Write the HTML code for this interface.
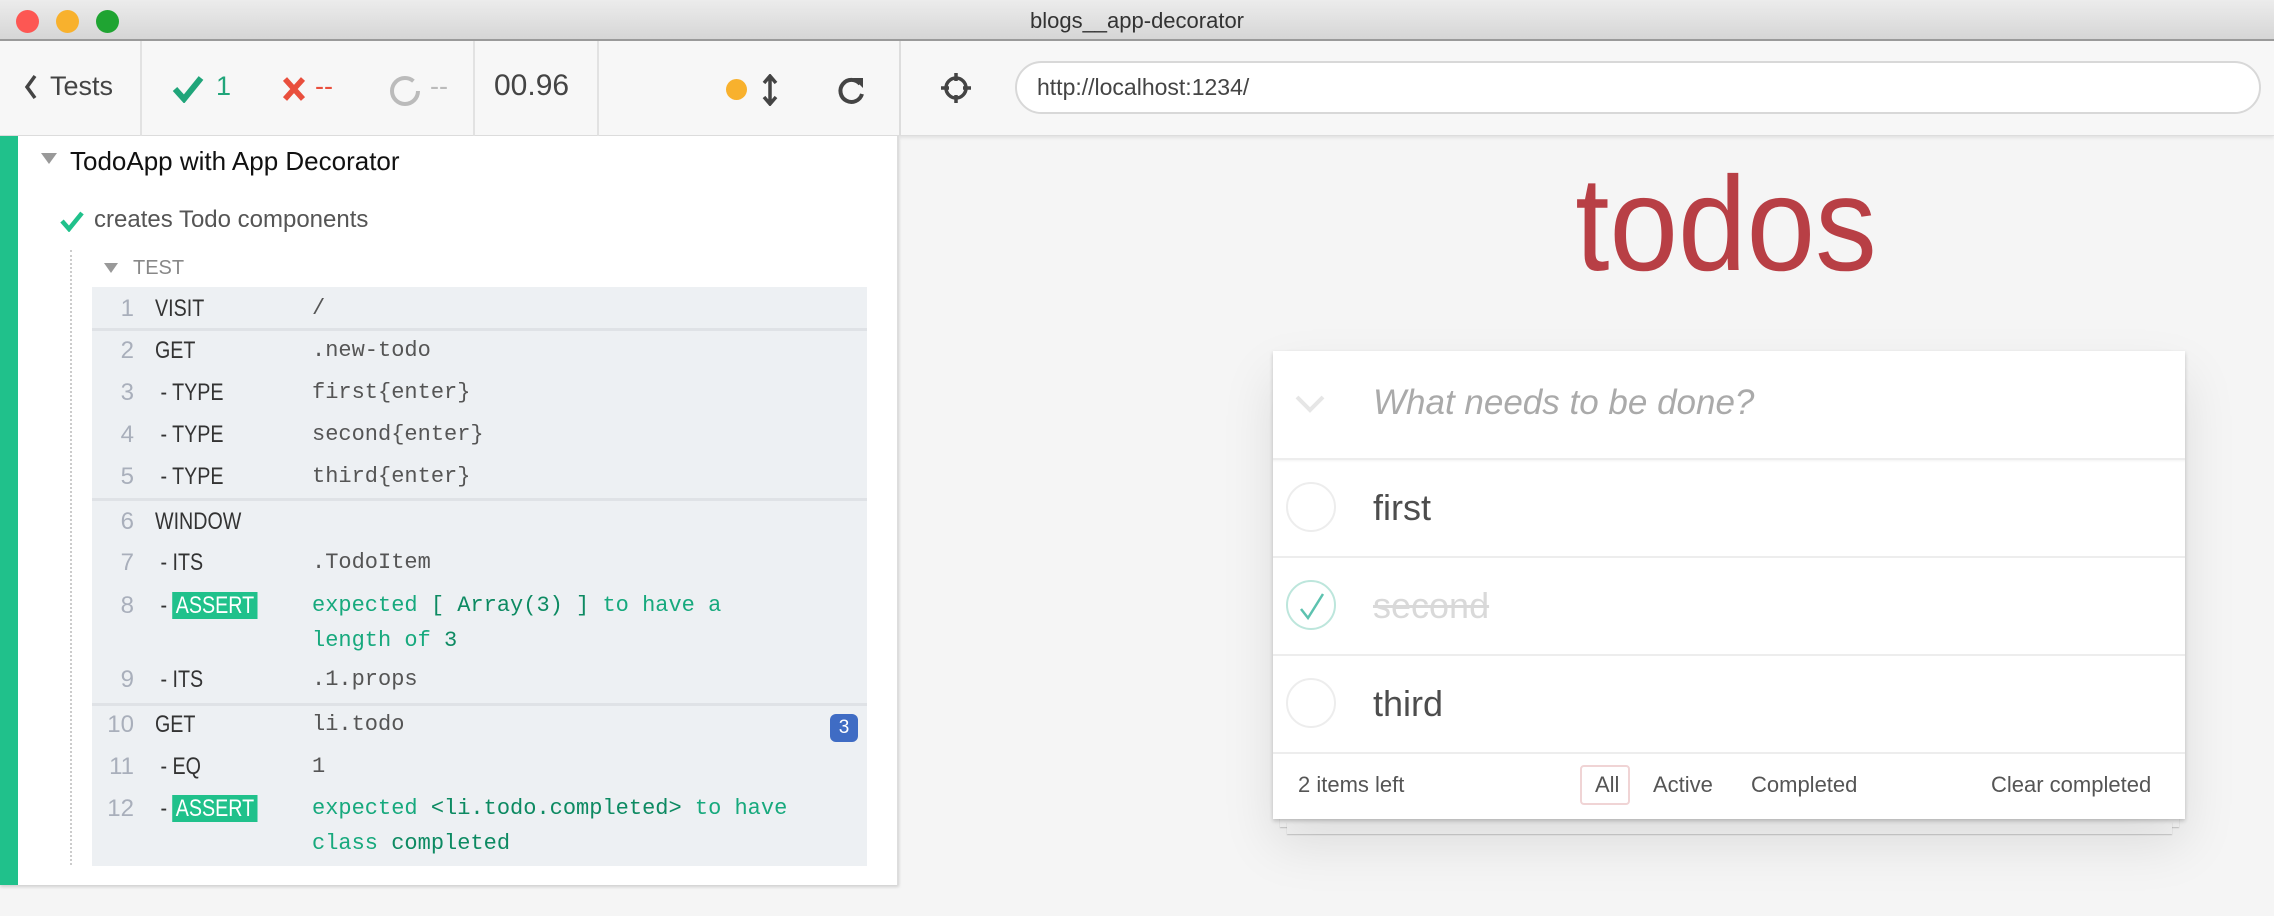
<!DOCTYPE html>
<html><head><meta charset="utf-8"><style>
*{box-sizing:border-box;margin:0;padding:0}
body{width:2274px;height:916px;overflow:hidden;background:#f5f5f5;font-family:"Liberation Sans",sans-serif;position:relative}
.abs{position:absolute}
#title{left:0;top:0;width:2274px;height:41px;background:linear-gradient(#ececec,#d6d6d6);border-bottom:2px solid #9a9a9a;text-align:center;font-size:22px;line-height:41px;color:#333}
.dot{top:10px;width:23px;height:23px;border-radius:50%}
#tb{left:0;top:41px;width:2274px;height:95px;background:#f7f7f7;border-bottom:1px solid #ddd;box-shadow:0 2px 3px rgba(0,0,0,.08)}
.vd{top:41px;height:95px;width:2px;background:#e2e2e2}
.tt{font-size:27px;color:#444;top:71px}
#left{left:0;top:136px;width:899px;height:749px;background:#fff;border-right:2px solid #ddd;box-shadow:0 2px 3px rgba(0,0,0,.15)}
#green{left:0;top:136px;width:18px;height:749px;background:#20c18b}
#cmd{left:92px;top:287px;width:775px;height:579px;background:#edf0f3}
.r{position:absolute;left:0;width:775px;font-size:22px;height:40px;line-height:40px}
.n{position:absolute;width:42px;text-align:right;color:#a9afbb;font-family:"Liberation Sans",sans-serif;font-size:24px}
.c{position:absolute;left:63px;color:#333;font-family:"Liberation Sans",sans-serif;font-size:24px;transform:scaleX(.82);transform-origin:left}
.v{position:absolute;left:220px;color:#555;font-family:"Liberation Mono",monospace;font-size:22px}
.g{color:#17a97d}.gb{color:#0d8a62}
.as{background:#20c18b;color:#fff;padding:0 4px}
.sep{position:absolute;left:0;width:775px;height:3px;background:#dfe2e6}
#card{left:1273px;top:351px;width:912px;height:468px;background:#fff;box-shadow:0 2px 4px rgba(0,0,0,.2),0 25px 50px rgba(0,0,0,.1)}
.it{position:absolute;left:0;width:912px;border-top:2px solid #ededed}
.ci{position:absolute;left:13px;width:50px;height:50px;border-radius:50%;border:2px solid #ededed}
.itx{position:absolute;left:100px;font-size:36px;color:#4d4d4d}
.ft{position:absolute;font-size:22px;color:#555;top:421px}
</style></head><body>
<div id="title" class="abs">blogs__app-decorator</div>
<div class="abs dot" style="left:16px;background:#fd5753"></div>
<div class="abs dot" style="left:56px;background:#f8b12d"></div>
<div class="abs dot" style="left:96px;background:#1fa432"></div>
<div id="tb" class="abs"></div>
<div class="abs vd" style="left:140px"></div>
<div class="abs vd" style="left:473px"></div>
<div class="abs vd" style="left:597px"></div>
<div class="abs vd" style="left:899px;background:#ddd"></div>
<svg class="abs" style="left:24px;top:74px" width="14" height="26"><path d="M11 2 3 13l8 11" stroke="#444" stroke-width="3.5" fill="none"/></svg>
<div class="abs tt" style="left:50px">Tests</div>
<svg class="abs" style="left:172px;top:75px" width="32" height="28"><path d="M3 14l9 10L29 3" stroke="#20a57a" stroke-width="6" fill="none"/></svg>
<div class="abs tt" style="left:216px;color:#20a57a">1</div>
<svg class="abs" style="left:282px;top:76px" width="24" height="26"><path d="M3 3l18 20M21 3 3 23" stroke="#e94f3d" stroke-width="5.5"/></svg>
<div class="abs tt" style="left:315px;color:#e94f3d">--</div>
<svg class="abs" style="left:388px;top:74px" width="34" height="34"><circle cx="17" cy="17" r="13" stroke="#bbb" stroke-width="4" fill="none" stroke-dasharray="70 12"/></svg>
<div class="abs tt" style="left:430px;color:#bbb">--</div>
<div class="abs" style="left:494px;top:69px;font-size:30px;color:#444">00.96</div>
<div class="abs" style="left:726px;top:79px;width:21px;height:21px;border-radius:50%;background:#f8b12d"></div>
<svg class="abs" style="left:762px;top:74px" width="16" height="32"><path d="M8 3v26M2 9l6-7 6 7M2 23l6 7 6-7" stroke="#444" stroke-width="3.5" fill="none"/></svg>
<svg class="abs" style="left:836px;top:74px" width="30" height="32"><path d="M24 10A11 11 0 1 0 26 20" stroke="#444" stroke-width="4" fill="none"/><path d="M17 4h10v10z" fill="#444"/></svg>
<svg class="abs" style="left:940px;top:72px" width="32" height="32"><circle cx="16" cy="16" r="10" stroke="#444" stroke-width="3.5" fill="none"/><path d="M16 1v8M16 23v8M1 16h8M23 16h8" stroke="#444" stroke-width="3.5"/></svg>
<div class="abs" style="left:1015px;top:61px;width:1246px;height:53px;border-radius:27px;background:#fff;border:2px solid #d8d8d8;font-size:23px;color:#444;line-height:49px;padding-left:20px">http://localhost:1234/</div>
<div id="left" class="abs"></div>
<div id="green" class="abs"></div>
<svg class="abs" style="left:40px;top:152px" width="18" height="14"><path d="M1 1h16L9 12z" fill="#999"/></svg>
<div class="abs" style="left:70px;top:146px;font-size:26px;color:#111">TodoApp with App Decorator</div>
<svg class="abs" style="left:60px;top:210px" width="24" height="22"><path d="M2 11l7 8L22 3" stroke="#20c18b" stroke-width="4.5" fill="none"/></svg>
<div class="abs" style="left:94px;top:206px;font-size:24px;color:#555">creates Todo components</div>
<div class="abs" style="left:70px;top:250px;height:615px;border-left:2px dotted #ccc"></div>
<svg class="abs" style="left:103px;top:262px" width="16" height="12"><path d="M1 1h14L8 11z" fill="#999"/></svg>
<div class="abs" style="left:133px;top:257px;font-size:20px;color:#888">TEST</div>
<div id="cmd" class="abs">
<div class="r" style="top:2px"><span class="n">1</span><span class="c">VISIT</span><span class="v">/</span></div>
<div class="sep" style="top:41px"></div>
<div class="r" style="top:44px"><span class="n">2</span><span class="c">GET</span><span class="v">.new-todo</span></div>
<div class="r" style="top:86px"><span class="n">3</span><span class="c">&nbsp;- TYPE</span><span class="v">first{enter}</span></div>
<div class="r" style="top:128px"><span class="n">4</span><span class="c">&nbsp;- TYPE</span><span class="v">second{enter}</span></div>
<div class="r" style="top:170px"><span class="n">5</span><span class="c">&nbsp;- TYPE</span><span class="v">third{enter}</span></div>
<div class="sep" style="top:211px"></div>
<div class="r" style="top:215px"><span class="n">6</span><span class="c">WINDOW</span></div>
<div class="r" style="top:256px"><span class="n">7</span><span class="c">&nbsp;- ITS</span><span class="v">.TodoItem</span></div>
<div class="r" style="top:299px"><span class="n">8</span><span class="c">&nbsp;- <span class="as">ASSERT</span></span><span class="v g">expected <span class="gb">[ Array(3) ]</span> to have a</span></div>
<div class="r" style="top:334px"><span class="v g">length of <span class="gb">3</span></span></div>
<div class="r" style="top:373px"><span class="n">9</span><span class="c">&nbsp;- ITS</span><span class="v">.1.props</span></div>
<div class="sep" style="top:416px"></div>
<div class="r" style="top:418px"><span class="n">10</span><span class="c">GET</span><span class="v">li.todo</span><span style="position:absolute;left:738px;top:9px;width:28px;height:28px;border-radius:6px;background:#3f6cc4;color:#fff;font-size:19px;line-height:28px;text-align:center">3</span></div>
<div class="r" style="top:460px"><span class="n">11</span><span class="c">&nbsp;- EQ</span><span class="v">1</span></div>
<div class="r" style="top:502px"><span class="n">12</span><span class="c">&nbsp;- <span class="as">ASSERT</span></span><span class="v g">expected <span class="gb">&lt;li.todo.completed&gt;</span> to have</span></div>
<div class="r" style="top:537px"><span class="v g">class <span class="gb">completed</span></span></div>
</div>
<div class="abs" style="left:1496px;top:148px;width:460px;text-align:center;font-size:134px;font-weight:100;color:#b83f45;transform:scaleX(.92)">todos</div>
<div class="abs" style="left:1280px;top:815px;width:899px;height:12px;background:#f6f6f6;box-shadow:0 1px 1px rgba(0,0,0,.2)"></div>
<div class="abs" style="left:1287px;top:822px;width:885px;height:12px;background:#f6f6f6;box-shadow:0 1px 1px rgba(0,0,0,.2)"></div>
<div id="card" class="abs">
<svg style="position:absolute;left:22px;top:44px" width="30" height="18"><path d="M2 2l13 13L28 2" stroke="#e6e6e6" stroke-width="4" fill="none"/></svg>
<div style="position:absolute;left:100px;top:32px;font-size:35px;font-style:italic;color:#aaa;font-weight:300">What needs to be done?</div>
<div class="it" style="top:107px;height:98px;box-shadow:inset 0 3px 2px -2px rgba(0,0,0,.05)"><div class="ci" style="top:22px"></div><div class="itx" style="top:27px">first</div></div>
<div class="it" style="top:205px;height:98px"><div class="ci" style="top:22px;border-color:#bde6dc"></div><svg style="position:absolute;left:25px;top:33px" width="28" height="30"><path d="M3 18l7 9L25 3" stroke="#5dc2af" stroke-width="2.5" fill="none"/></svg><div class="itx" style="top:27px;color:#d9d9d9;text-decoration:line-through">second</div></div>
<div class="it" style="top:303px;height:98px"><div class="ci" style="top:22px"></div><div class="itx" style="top:27px">third</div></div>
<div class="it" style="top:401px;height:0"></div>
<div class="ft" style="left:25px">2 items left</div>
<div class="abs" style="left:307px;top:414px;width:50px;height:40px;border:2px solid #f0d4d5;border-radius:4px"></div>
<div class="ft" style="left:322px">All</div>
<div class="ft" style="left:380px">Active</div>
<div class="ft" style="left:478px">Completed</div>
<div class="ft" style="left:718px">Clear completed</div>
</div>
</body></html>
